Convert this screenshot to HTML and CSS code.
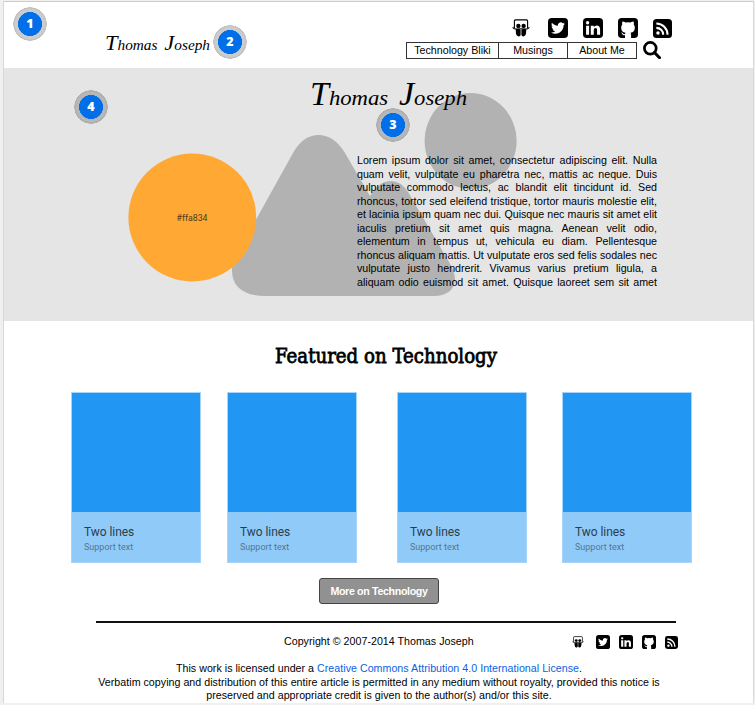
FILE: index.html
```html
<!DOCTYPE html>
<html lang="en">
<head>
<meta charset="utf-8">
<title>Thomas Joseph</title>
<link rel="stylesheet" href="styles.css">
</head>
<body>
<svg class="sprite" aria-hidden="true">
  <symbol id="slideshare" viewBox="0 0 24 24">
    <path d="M3.2 12V2.6Q3.2 1.2 4.6 1.2H19.4Q20.8 1.2 20.8 2.6V12" fill="none" stroke="#000" stroke-width="1.5"/>
    <path d="M.8 11.200Q3 14 7.500 13.400Q12 12.600 16.500 13.400Q21 14 23.200 11.200" fill="none" stroke="#000" stroke-width="1.400"/>
    <circle cx="8.500" cy="9.200" r="2.900"/><circle cx="15.500" cy="9.200" r="2.900"/>
    <path d="M5 13.500Q9 12.500 11.500 14V21Q11.300 23.200 9 23.200Q5.500 23 5.200 18ZM19 13.500Q15 12.500 12.500 14V21Q12.700 23.200 15 23.200Q18.500 23 18.800 18Z"/>
  </symbol>
  <symbol id="twitter" viewBox="0 0 24 24">
    <rect width="24" height="24" rx="4.500"/>
    <path transform="translate(3.600 3.600) scale(.7)" fill="#fff" d="M23.953 4.570a10 10 0 01-2.825.775 4.958 4.958 0 002.163-2.723c-.951.555-2.005.959-3.127 1.184a4.920 4.920 0 00-8.384 4.482C7.690 8.095 4.067 6.130 1.640 3.162a4.822 4.822 0 00-.666 2.475c0 1.710.870 3.213 2.188 4.096a4.904 4.904 0 01-2.228-.616v.060a4.923 4.923 0 003.946 4.827 4.996 4.996 0 01-2.212.085 4.936 4.936 0 004.604 3.417 9.867 9.867 0 01-6.102 2.105c-.390 0-.779-.023-1.170-.067a13.995 13.995 0 007.557 2.209c9.053 0 13.998-7.496 13.998-13.985 0-.210 0-.420-.015-.630A9.935 9.935 0 0024 4.590z"/>
  </symbol>
  <symbol id="linkedin" viewBox="0 0 24 24">
    <rect width="24" height="24" rx="4.500"/>
    <g fill="#fff"><circle cx="5.500" cy="5.700" r="2"/><path d="M3.700 9.200H7.300V20H3.700ZM9.300 9.200H12.900V10.700Q14.200 8.900 16.500 8.900Q20.500 9 20.500 13.800V20H16.900V14.200Q16.900 11.900 15.100 11.900Q12.900 12 12.900 14.500V20H9.300Z"/></g>
  </symbol>
  <symbol id="github" viewBox="0 0 24 24">
    <rect width="24" height="24" rx="4.500"/>
    <path fill="#fff" d="M8.400 24V20.700Q5.700 21.200 4.900 18.900L3.700 17.500Q5.200 17.200 6.200 18.800Q7 19.700 8.400 19.200L9 17.700Q3.800 16.800 3.800 11.700Q3.800 9.500 5.100 7.900Q4.600 6.200 5.300 4.200Q7.200 4.200 9.100 5.500Q12 4.800 14.900 5.500Q16.800 4.200 18.700 4.200Q19.400 6.200 18.900 7.900Q20.200 9.500 20.200 11.700Q20.200 16.800 15 17.700Q15.700 18.500 15.700 20V24Z"/>
  </symbol>
  <symbol id="rss" viewBox="0 0 24 24">
    <rect width="24" height="24" rx="4.500"/>
    <circle cx="6.300" cy="17.800" r="2.200" fill="#fff"/>
    <path d="M4.200 11.200A8.500 8.500 0 0 1 12.800 19.800M4.200 5.600A14.200 14.200 0 0 1 18.400 19.800" fill="none" stroke="#fff" stroke-width="2.600"/>
  </symbol>
  <symbol id="search" viewBox="0 0 18 18">
    <circle cx="7.300" cy="7.300" r="5.900" fill="none" stroke="#000" stroke-width="2.700"/>
    <path d="M11.500 11.500L16.500 16.700" stroke="#000" stroke-width="3.100" stroke-linecap="round"/>
  </symbol>
</svg>

<div class="page">
  <header class="header">
    <svg class="logo" width="112" height="30"><text x="3" y="20" textLength="105" lengthAdjust="spacingAndGlyphs"><tspan class="cap">T</tspan>homas <tspan class="cap" dx="3">J</tspan>oseph</text></svg>
    <div class="tools">
      <div class="social">
        <svg><use href="#slideshare"/></svg><svg><use href="#twitter"/></svg><svg><use href="#linkedin"/></svg><svg><use href="#github"/></svg><svg><use href="#rss"/></svg>
      </div>
      <div class="navrow">
        <nav class="nav"><a>Technology Bliki</a><a>Musings</a><a>About Me</a></nav>
        <svg class="search"><use href="#search"/></svg>
      </div>
    </div>
  </header>

  <section class="hero">
    <svg class="art" viewBox="4 68 749 253" width="749" height="253">
      <g fill="#b2b2b2">
        <path d="M232 263L293 153Q303 135 318.500 135Q334 135 345 153L370 196Q379 181 391 181Q401 181 408 192L449 262Q455 272 455 279C455 290 446 296 434 296H265C243 296 232 286 232 271Z"/>
        <ellipse cx="470.600" cy="141" rx="46" ry="48"/>
      </g>
      <circle cx="192.300" cy="217.500" r="63.900" fill="#ffa834"/>
      <text class="swatch" x="176.500" y="221" textLength="31" lengthAdjust="spacingAndGlyphs">#ffa834</text>
      <text class="signature" x="310" y="105" textLength="157" lengthAdjust="spacingAndGlyphs"><tspan class="cap">T</tspan>homas <tspan class="cap" dx="5">J</tspan>oseph</text>
    </svg>
    <p class="intro">
      <span>Lorem ipsum dolor sit amet, consectetur adipiscing elit. Nulla</span>
      <span>quam velit, vulputate eu pharetra nec, mattis ac neque. Duis</span>
      <span>vulputate commodo lectus, ac blandit elit tincidunt id. Sed</span>
      <span>rhoncus, tortor sed eleifend tristique, tortor mauris molestie elit,</span>
      <span>et lacinia ipsum quam nec dui. Quisque nec mauris sit amet elit</span>
      <span>iaculis pretium sit amet quis magna. Aenean velit odio,</span>
      <span>elementum in tempus ut, vehicula eu diam. Pellentesque</span>
      <span>rhoncus aliquam mattis. Ut vulputate eros sed felis sodales nec</span>
      <span>vulputate justo hendrerit. Vivamus varius pretium ligula, a</span>
      <span>aliquam odio euismod sit amet. Quisque laoreet sem sit amet</span>
    </p>
  </section>

  <main class="featured">
    <h2><svg width="250" height="36"><text x="2" y="22" textLength="222" lengthAdjust="spacingAndGlyphs">Featured on Technology</text></svg></h2>
    <div class="cards">
      <article class="card"><div class="photo"></div><div class="caption"><h3>Two lines</h3><p>Support text</p></div></article>
      <article class="card"><div class="photo"></div><div class="caption"><h3>Two lines</h3><p>Support text</p></div></article>
      <article class="card"><div class="photo"></div><div class="caption"><h3>Two lines</h3><p>Support text</p></div></article>
      <article class="card"><div class="photo"></div><div class="caption"><h3>Two lines</h3><p>Support text</p></div></article>
    </div>
    <button class="more">More on Technology</button>
  </main>

  <footer class="footer">
    <div class="copy">
      <span>Copyright © 2007-2014 Thomas Joseph</span>
      <div class="social small">
        <svg><use href="#slideshare"/></svg><svg><use href="#twitter"/></svg><svg><use href="#linkedin"/></svg><svg><use href="#github"/></svg><svg><use href="#rss"/></svg>
      </div>
    </div>
    <p class="license">This work is licensed under a <a>Creative Commons Attribution 4.0 International License</a>.<br>Verbatim copying and distribution of this entire article is permitted in any medium without royalty, provided this notice is<br>preserved and appropriate credit is given to the author(s) and/or this site.</p>
  </footer>
</div>

<span class="badge b1">1</span>
<span class="badge b2">2</span>
<span class="badge b3">3</span>
<span class="badge b4">4</span>
</body>
</html>
```
FILE: styles.css
```css
* { box-sizing: border-box; }
body {
  margin: 0;
  height: 705px;
  overflow: hidden;
  position: relative;
  padding: 1px 1px 2px 3px;
  background: #f0f0f0;
  color: #000;
  font: 10.67px "Liberation Sans", Arial, sans-serif;
}
.sprite { position: absolute; width: 0; height: 0; }
.page {
  height: 702px;
  background: #fff;
  border: 1px solid #d8d8d8;
  border-top-color: #ccc;
  border-bottom: 0;
}
svg { display: block; }

.header {
  height: 66px;
  display: flex;
  justify-content: space-between;
  padding: 15px 91px 0 98px;
}
.logo { margin-top: 13px; overflow: visible; }
.logo text { font: italic 15px "Liberation Serif", serif; }
.logo .cap { font-size: 22px; }
.tools { width: 256px; }
.social { display: flex; align-items: center; width: 162px; margin-left: 106px; padding-top: 1px; }
.social svg { flex: none; width: 20px; height: 20px; }
.social svg:nth-child(n+2) { margin-right: 15px; }
.social svg:first-child { width: 18px; height: 18px; margin-right: 18px; }
.social svg:last-child { width: 19px; height: 19px; margin: 0; }
.navrow { display: flex; align-items: center; gap: 6px; margin-top: 3px; }
.nav { display: flex; flex: none; width: 231px; height: 17px; border: 1px solid #333; }
.nav a { flex: 0 0 69px; line-height: 15px; text-align: center; }
.nav a:first-child { flex-basis: 91px; }
.nav a + a { border-left: 1px solid #333; }
.search { width: 18px; height: 18px; flex: none; }

.hero { position: relative; height: 253px; background: #e5e5e5; padding: 86px 96px 0 353px; }
.art { position: absolute; left: 0; top: 0; }
.signature { font: italic 22px "Liberation Serif", serif; }
.signature .cap { font-size: 33px; }
.swatch { font: 9px Roboto, sans-serif; fill: #523a1c; }
.intro { position: relative; margin: 0; width: 300px; }
.intro span { display: block; height: 13.500px; line-height: 13.500px; white-space: nowrap; text-align: justify; text-align-last: justify; }

.featured { height: 300px; padding-top: 20px; }
.featured h2 { margin: 0 0 0 269px; height: 51px; }
.featured h2 svg { overflow: visible; }
.featured h2 text { font: 400 20px "DejaVu Serif", serif; stroke: #000; stroke-width: .8px; }
.cards { display: grid; grid-template-columns: 156px 170px 165px 130px; padding-left: 67px; }
.card { width: 130px; height: 171px; border: 1px solid #a6d4fa; }
.photo { height: 120px; background: #2196f3; border-bottom: 1px solid #90caf9; }
.caption { height: 49px; background: #90caf9; padding: 11px 12px; font-family: Roboto, sans-serif; }
.caption h3 { margin: 0; font-size: 12px; font-weight: 400; line-height: 16px; letter-spacing: -.050px; color: #2c3d4b; }
.caption p { margin: 1px 0 0; font-size: 9px; line-height: 13px; color: #55778f; }
.more {
  display: block;
  width: 120px;
  height: 26px;
  margin: 15px 0 0 315px;
  padding: 0 0 1px;
  border: 1px solid #444;
  border-radius: 3px;
  background: #919191;
  color: #fff;
  font: bold 10.670px "Liberation Sans", Arial, sans-serif;
  letter-spacing: -.350px;
}

.footer { margin: 0 77px 0 92px; }
.copy { display: flex; border-top: 2px solid #111; height: 40px; padding: 11px 0 0 188px; }
.copy span { width: 192px; line-height: 15px; white-space: nowrap; letter-spacing: .020px; }
.social.small { flex: none; width: 106px; height: 15px; margin-left: 96px; padding-top: 1px; transform: translateX(2px); }
.social.small svg { width: 14px; height: 14px; margin-right: 9px; }
.social.small svg:first-child { width: 12px; height: 12px; margin-right: 12px; }
.social.small svg:last-child { width: 13px; height: 13px; margin: 0; }
.license { margin: 1px -4px 0 -18px; line-height: 13.500px; text-align: center; letter-spacing: .025px; white-space: nowrap; }
.license a { color: #0b5fe0; }

.badge {
  position: absolute;
  width: 34px;
  height: 34px;
  border-radius: 50%;
  background: radial-gradient(circle closest-side, #006fe8 0 11.800px, rgba(0,50,100,.240) 12.200px, rgba(0,0,0,.200) 13px 14.500px, rgba(0,0,0,.250) 16.500px, transparent 17px);
  color: #fff;
  font: 800 12.500px/34px "Open Sans", sans-serif;
  text-align: center;
}
.b1 { left: 13px; top: 7px; }
.b2 { left: 213px; top: 25px; }
.b3 { left: 376px; top: 108px; }
.b4 { left: 74px; top: 90px; }
```
